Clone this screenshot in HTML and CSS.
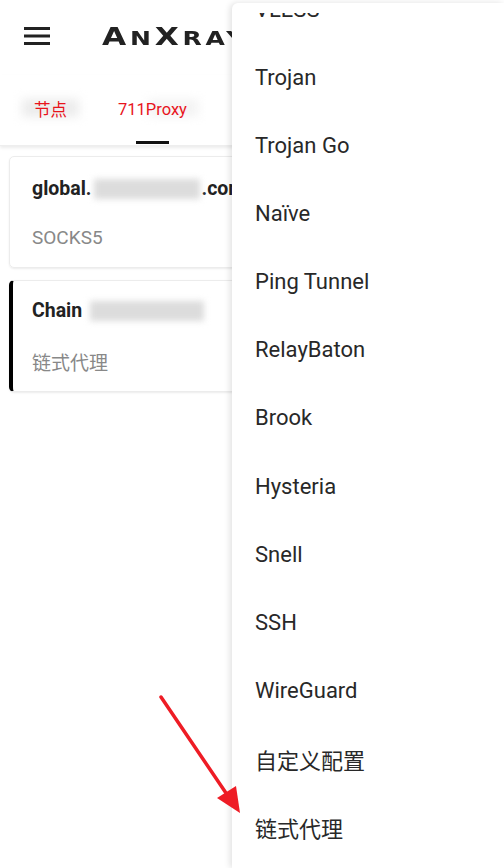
FILE: index.html
```html
<!DOCTYPE html>
<html lang="zh">
<head>
    <meta charset="UTF-8">
    <meta name="viewport" content="width=device-width, initial-scale=1.0">
    <title>AnXray</title>
    <link rel="stylesheet" href="styles.css">
</head>
<body>

<header class="app-bar">
    <svg class="menu-icon" width="26" height="18" viewBox="0 0 26 18">
        <rect x="0" y="0" width="26" height="3" fill="#222"/>
        <rect x="0" y="7.5" width="26" height="3" fill="#222"/>
        <rect x="0" y="15" width="26" height="3" fill="#222"/>
    </svg>
    <div class="logo">A<span class="small">N</span>X<span class="small">RAY</span></div>
</header>

<nav class="tabs">
    <div class="tab"><span class="blur-bg"></span>节点</div>
    <div class="tab active"><span class="blur-bg faint"></span>711Proxy</div>
</nav>

<div class="list">
    <div class="card">
        <div class="card-title">global.<span class="mask wide"></span>.com</div>
        <div class="card-sub">SOCKS5</div>
    </div>
    <div class="card selected">
        <div class="card-title">Chain<span class="mask"></span></div>
        <div class="card-sub">链式代理</div>
    </div>
</div>

<div class="popup">
    <div class="popup-scroll">
        <ul class="popup-list">
            <li>VLESS</li>
            <li>Trojan</li>
            <li>Trojan Go</li>
            <li>Naïve</li>
            <li>Ping Tunnel</li>
            <li>RelayBaton</li>
            <li>Brook</li>
            <li>Hysteria</li>
            <li>Snell</li>
            <li>SSH</li>
            <li>WireGuard</li>
            <li>自定义配置</li>
            <li>链式代理</li>
        </ul>
    </div>
</div>

<svg class="arrow" width="504" height="868" viewBox="0 0 504 868">
    <line x1="161" y1="697" x2="228" y2="796" stroke="#ee1c25" stroke-width="3.5" stroke-linecap="round"/>
    <polygon points="240,813 217,798 236,786" fill="#ee1c25"/>
</svg>

</body>
</html>
```

FILE: styles.css
```css
body {
    margin: 0;
    width: 504px;
    height: 868px;
    overflow: hidden;
    position: relative;
    background: #fff;
    font-family: Roboto, "Noto Sans CJK SC", sans-serif;
    color: #222;
}
.app-bar {
    height: 75px;
    display: flex;
    align-items: center;
    padding-left: 24px;
    gap: 52px;
}
.menu-icon {
    flex-shrink: 0;
    margin-top: -3px;
}
.logo {
    font-family: "DejaVu Sans", sans-serif;
    font-size: 25px;
    font-weight: bold;
    letter-spacing: 3px;
    color: #222;
    transform: scaleX(1.25);
    transform-origin: left center;
    white-space: nowrap;
    margin-top: -2px;
}
.logo .small {
    font-size: 20px;
}
.tabs {
    height: 70px;
    display: flex;
    align-items: center;
    padding-left: 34px;
    gap: 51px;
    box-shadow: 0 2px 3px rgba(0, 0, 0, 0.08);
    border-bottom: 1px solid #eee;
    position: relative;
}
.tab {
    font-size: 16.5px;
    color: #e8141c;
    position: relative;
    height: 70px;
    display: flex;
    align-items: center;
    margin-top: -2px;
}
.tab .blur-bg {
    position: absolute;
    left: -12px;
    right: -12px;
    top: 25px;
    height: 18px;
    background: #ececec;
    filter: blur(5px);
    z-index: -1;
}
.tab .blur-bg.faint {
    background: #f4f4f4;
    left: 30px;
}
.tab.active::after {
    content: "";
    position: absolute;
    left: 18px;
    width: 33px;
    bottom: 0;
    height: 3px;
    background: #111;
}
.list {
    padding: 10px 9px;
    display: flex;
    flex-direction: column;
    gap: 12px;
}
.card {
    height: 110px;
    border: 1px solid #ececec;
    border-radius: 5px;
    box-shadow: 0 1px 2px rgba(0, 0, 0, 0.08);
    padding: 0 22px;
    display: flex;
    flex-direction: column;
    justify-content: center;
    gap: 24px;
    white-space: nowrap;
    overflow: hidden;
}
.card.selected {
    border-left: 4px solid #000;
    padding-left: 19px;
}
.card-title {
    font-size: 19.5px;
    font-weight: bold;
    color: #222;
    display: flex;
    align-items: center;
    margin-top: 2px;
}
.card-sub {
    font-size: 19px;
    color: #888;
    margin-top: 2px;
}
.mask {
    display: inline-block;
    width: 114px;
    height: 20px;
    background: #dcdcdc;
    filter: blur(3px);
    margin-left: 8px;
}
.mask.wide {
    width: 106px;
    margin: 0 2px;
}
.popup {
    position: absolute;
    left: 232px;
    top: 3px;
    right: 0;
    bottom: 0;
    background: #fff;
    border-top-left-radius: 6px;
    box-shadow: -2px 0 6px rgba(0, 0, 0, 0.12);
    padding-top: 10px;
}
.popup-scroll {
    height: 100%;
    overflow: hidden;
}
.popup-list {
    list-style: none;
    margin: -38px 0 0 0;
    padding: 0;
}
.popup-list li {
    height: 68.15px;
    display: flex;
    align-items: center;
    padding-left: 23px;
    font-size: 22px;
    color: #282828;
}
.arrow {
    position: absolute;
    left: 0;
    top: 0;
    pointer-events: none;
}
```
